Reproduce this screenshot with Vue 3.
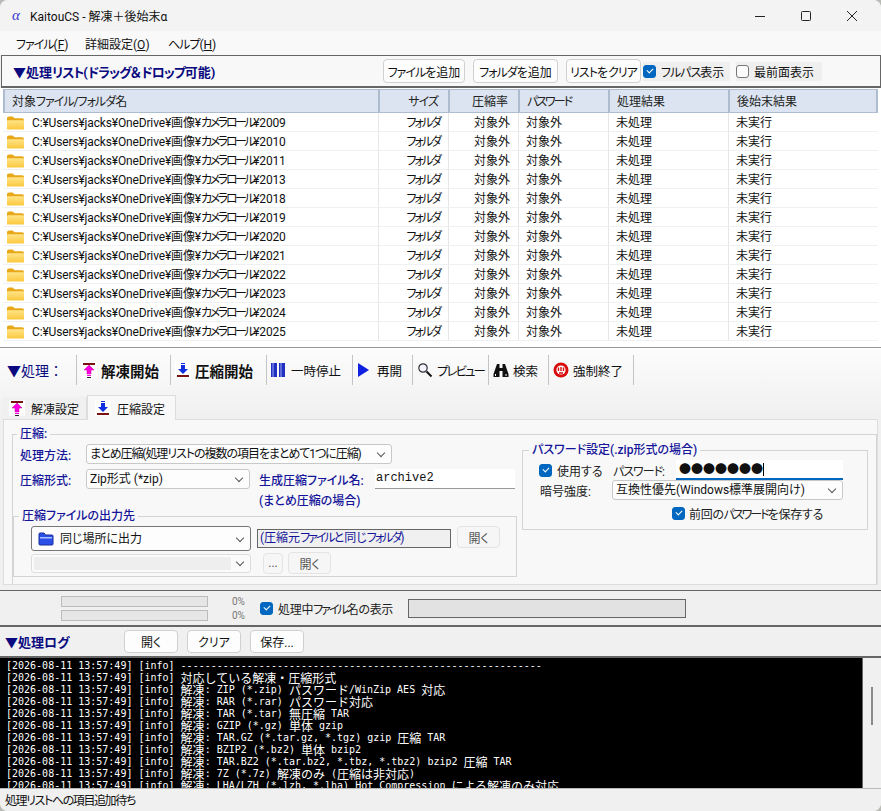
<template>
  <div class="win">
    <svg class="defs" width="0" height="0">
      <defs>
        <symbol id="up" viewBox="0 0 16 16">
          <rect width="16" height="16" fill="#fff" />
          <rect x="2" y="1" width="12" height="2" fill="#7a1010" />
          <path d="M8 3 L13 8 H10 V12 H6 V8 H3 Z" fill="#ff00e0" stroke="#c000a0" stroke-width=".5" />
          <rect x="6" y="13" width="4" height="1" fill="#ff00e0" />
          <rect x="6" y="15" width="4" height="1" fill="#222" />
        </symbol>
        <symbol id="down" viewBox="0 0 16 16">
          <rect width="16" height="16" fill="#fff" />
          <rect x="6" y="1" width="4" height="1" fill="#1030e0" />
          <path d="M6 3 H10 V7 H13 L8 12 L3 7 H6 Z" fill="#1030e0" />
          <rect x="2" y="13" width="12" height="2" fill="#7a1010" />
        </symbol>
        <symbol id="folder" viewBox="0 0 18 14">
          <path d="M0 2 Q0 0 2 0 H6 L8 2 H16 Q18 2 18 4 V5 H0 Z" fill="#e8a818" />
          <rect y="4" width="18" height="10" rx="1" fill="url(#fold)" />
          <linearGradient id="fold" x1="0" y1="0" x2="0" y2="1">
            <stop offset="0" stop-color="#ffe48a" />
            <stop offset="1" stop-color="#fbc83c" />
          </linearGradient>
        </symbol>
      </defs>
    </svg>

    <div class="title">
      <span class="alpha">α</span>
      <span class="title-text">KaitouCS - 解凍＋後始末α</span>
      <div class="caption">
        <svg width="12" height="12" viewBox="0 0 12 12"><path d="M1 6.5 H11" stroke="#222" /></svg>
        <svg width="12" height="12" viewBox="0 0 12 12"><rect x="1.5" y="1.5" width="9" height="9" rx="1" fill="none" stroke="#222" /></svg>
        <svg width="12" height="12" viewBox="0 0 12 12"><path d="M1 1 L11 11 M11 1 L1 11" stroke="#222" /></svg>
      </div>
    </div>

    <div class="menu">
      <span class="m1"><span class="k">ファイル</span>(<u>F</u>)</span>
      <span class="m2">詳細設定(<u>O</u>)</span>
      <span><span class="k">ヘルプ</span>(<u>H</u>)</span>
    </div>

    <div class="list-head">
      <b class="head-title">▼処理<span class="k">リスト</span>(<span class="k">ドラッグ</span>＆<span class="k">ドロップ</span>可能)</b>
      <div class="list-tools">
        <button class="btn tool-btn b1"><span class="k">ファイル</span>を追加</button>
        <button class="btn tool-btn b2"><span class="k">フォルダ</span>を追加</button>
        <button class="btn tool-btn b3"><span class="k">リスト</span>を<span class="k">クリア</span></button>
        <label class="opt opt1"><i class="check on"></i><span><span class="k">フルパス</span>表示</span></label>
        <label class="opt opt2"><i class="check"></i>最前面表示</label>
      </div>
    </div>

    <div class="list">
      <table>
        <colgroup>
          <col style="width: 375px" />
          <col style="width: 70px" />
          <col style="width: 70px" />
          <col style="width: 90px" />
          <col style="width: 120px" />
          <col />
        </colgroup>
        <thead>
          <tr>
            <th>対象<span class="k">ファイル/フォルダ</span>名</th>
            <th class="r"><span class="k">サイズ</span></th>
            <th class="r">圧縮率</th>
            <th><span class="kk">パスワード</span></th>
            <th>処理結果</th>
            <th>後始末結果</th>
          </tr>
        </thead>
        <tbody>
          <tr v-for="y in years" :key="y">
            <td class="name">
              <svg class="folder" width="17" height="14"><use href="#folder" /></svg>
              <span class="path">C:¥Users¥jacks¥OneDrive¥画像¥<span class="path-k">カメラ ロール</span>¥{{ y }}</span>
            </td>
            <td class="r"><span class="kk">フォルダ</span></td>
            <td class="r">対象外</td>
            <td>対象外</td>
            <td>未処理</td>
            <td>未実行</td>
          </tr>
        </tbody>
      </table>
    </div>

    <div class="toolbar-wrap">
      <div class="toolbar">
        <span class="tb-title">▼処理：</span>
        <div class="tb-item big" style="width: 94px">
          <svg width="16" height="16"><use href="#up" /></svg>解凍開始
        </div>
        <div class="tb-item big" style="width: 96px">
          <svg width="16" height="16"><use href="#down" /></svg>圧縮開始
        </div>
        <div class="tb-item" style="width: 86px">
          <svg width="16" height="16" viewBox="0 0 16 16">
            <rect x="0" y="1" width="6" height="14" fill="#2030c0" />
            <rect x="8" y="1" width="6" height="14" fill="#2030c0" />
            <path d="M2 1 V15 M10 1 V15" stroke="#9aa8f0" />
          </svg>一時停止
        </div>
        <div class="tb-item" style="width: 60px">
          <svg width="16" height="16" viewBox="0 0 16 16"><path d="M1 1 L12 8 L1 15 Z" fill="#1020e0" /></svg>再開
        </div>
        <div class="tb-item" style="width: 76px">
          <svg width="16" height="16" viewBox="0 0 16 16">
            <circle cx="6" cy="6" r="4.2" fill="#f4f4ff" stroke="#333" stroke-width="1.2" />
            <path d="M9.5 9.5 L14.5 14.5" stroke="#111" stroke-width="2" />
          </svg><span class="kk">プレビュー</span>
        </div>
        <div class="tb-item" style="width: 60px">
          <svg width="16" height="16" viewBox="0 0 16 16">
            <path d="M4 2 H6.5 V6 H9.5 V2 H12 L15.5 12 V15 H9.5 V9 H6.5 V15 H.5 V12 Z" fill="#111" />
            <path d="M2.5 12 V14 M13 12 V14" stroke="#fff" />
          </svg>検索
        </div>
        <div class="tb-item" style="width: 86px">
          <svg width="16" height="16" viewBox="0 0 16 16">
            <circle cx="8" cy="8" r="7.5" fill="#d80c0c" />
            <circle cx="8" cy="8" r="4.6" fill="#fff" />
            <path d="M5.5 5.5 V9 M8 5 V9 M10.5 5.5 V9 M6 11 H10" stroke="#d80c0c" stroke-width="1.4" />
          </svg>強制終了
        </div>
      </div>
      <div class="tabs">
        <div class="tab">
          <svg width="16" height="16"><use href="#up" /></svg>解凍設定
        </div>
        <div class="tab active">
          <svg width="16" height="16"><use href="#down" /></svg>圧縮設定
        </div>
      </div>
    </div>

    <div class="page">
      <fieldset class="outer">
        <legend>圧縮:</legend>
        <div class="cols">
          <div class="left">
            <div class="row">
              <span class="lab">処理方法:</span>
              <div class="sel method">まとめ圧縮(処理リストの複数の項目をまとめて1つに圧縮)</div>
            </div>
            <div class="row row2">
              <span class="lab">圧縮形式:</span>
              <div class="sel fmt">Zip形式 (*zip)</div>
              <span class="lab name-lab">生成圧縮ファイル名:</span>
              <div class="text-in">archive2</div>
            </div>
            <div class="lab note">(まとめ圧縮の場合)</div>
            <fieldset class="out">
              <legend>圧縮ファイルの出力先</legend>
              <div class="out-grid">
                <div class="sel dest">
                  <svg width="16" height="14" viewBox="0 0 16 14">
                    <path d="M1 2 Q1 1 2 1 H6 L7.5 3 H14 Q15 3 15 4 V12 Q15 13 14 13 H2 Q1 13 1 12 Z" fill="#2a50e8" stroke="#1a2f9c" />
                    <rect x="2" y="5" width="12" height="1.5" fill="#a8c0ff" />
                  </svg>
                  同じ場所に出力
                </div>
                <div class="path-box">(圧縮元<span class="kk">ファイル</span>と同じ<span class="kk">フォルダ</span>)</div>
                <button class="btn off open1">開く</button>
                <div class="sel disabled"><span class="fill"></span></div>
                <div class="out-btns">
                  <button class="btn off dots">...</button>
                  <button class="btn off open2">開く</button>
                </div>
              </div>
            </fieldset>
          </div>
          <fieldset class="pw">
            <legend>パスワード設定(.zip形式の場合)</legend>
            <div class="pw-row first">
              <label class="plain use"><i class="check on"></i>使用する</label>
              <span class="plain pw-lab"><span class="k">パスワード</span>:</span>
              <div class="pw-in">●●●●●●●<i class="caret"></i></div>
            </div>
            <div class="pw-row">
              <span class="plain enc-lab">暗号強度:</span>
              <div class="sel enc">互換性優先(Windows標準展開向け)</div>
            </div>
            <label class="plain save"><i class="check on"></i><span>前回の<span class="kk">パスワード</span>を保存する</span></label>
          </fieldset>
        </div>
      </fieldset>
    </div>

    <div class="progress">
      <div class="bars">
        <div class="bar-row"><div class="bar"></div><span class="pct">0%</span></div>
        <div class="bar-row"><div class="bar"></div><span class="pct">0%</span></div>
      </div>
      <label class="plain prog-opt"><i class="check on"></i><span>処理中<span class="kk">ファイル</span>名の表示</span></label>
      <div class="prog-file"></div>
    </div>

    <div class="log-head">
      <b class="head-title log-title">▼処理ログ</b>
      <button class="btn log-btn">開く</button>
      <button class="btn log-btn">クリア</button>
      <button class="btn log-btn">保存...</button>
    </div>

    <div class="log-wrap">
      <div class="log">
        <div v-for="(line, i) in logLines" :key="i" class="log-line">
          <span v-for="(part, j) in split(stamp + line)" :key="j" :class="{ wide: part.wide }">{{ part.text }}</span>
        </div>
      </div>
      <div class="scroll"><div class="thumb"></div></div>
    </div>

    <div class="status">処理リストへの項目追加待ち</div>
  </div>
</template>

<script setup>
const years = [2009, 2010, 2011, 2013, 2018, 2019, 2020, 2021, 2022, 2023, 2024, 2025]

const stamp = "[2026-08-11 13:57:49] [info] "
const logLines = [
  "-".repeat(60),
  "対応している解凍・圧縮形式",
  "解凍: ZIP (*.zip) パスワード/WinZip AES 対応",
  "解凍: RAR (*.rar) パスワード対応",
  "解凍: TAR (*.tar) 無圧縮 TAR",
  "解凍: GZIP (*.gz) 単体 gzip",
  "解凍: TAR.GZ (*.tar.gz, *.tgz) gzip 圧縮 TAR",
  "解凍: BZIP2 (*.bz2) 単体 bzip2",
  "解凍: TAR.BZ2 (*.tar.bz2, *.tbz, *.tbz2) bzip2 圧縮 TAR",
  "解凍: 7Z (*.7z) 解凍のみ (圧縮は非対応)",
  "解凍: LHA/LZH (*.lzh, *.lha) Hot Compression による解凍のみ対応",
]

// 全角だけ 12px にして半角 6px / 全角 12px の等幅に揃える
function split(text) {
  return text.match(/[\u3000-\u9fff]+|[^\u3000-\u9fff]+/g).map((s) => ({
    text: s,
    wide: /[\u3000-\u9fff]/.test(s),
  }))
}
</script>

<style>
html,
body {
  margin: 0;
  background: #b9bcb6;
  overflow: hidden;
}
</style>

<style scoped>
.win {
  width: 881px;
  height: 811px;
  box-sizing: border-box;
  overflow: hidden;
  background: #f0f0f0;
  border-radius: 8px;
  font-family: Roboto, "Noto Sans CJK JP", "Liberation Sans", sans-serif;
  font-size: 12px;
  font-feature-settings: "palt";
  white-space: nowrap;
  color: #111;
  display: flex;
  flex-direction: column;
}
.defs {
  position: absolute;
}
svg {
  flex: none;
}
.k {
  letter-spacing: -1px;
}
.kk {
  letter-spacing: -2px;
}
.title {
  height: 31px;
  flex: none;
  background: #f3f3f3;
  display: flex;
  align-items: center;
  padding-left: 12px;
}
.alpha {
  width: 18px;
  color: #3a3ad0;
  font-family: "Liberation Serif", serif;
  font-style: italic;
  font-size: 15px;
}
.caption {
  margin-left: auto;
  display: flex;
  gap: 34px;
  padding-right: 23px;
}
.menu {
  height: 24px;
  flex: none;
  background: #f9f9f9;
  display: flex;
  align-items: center;
  padding-left: 16px;
}
.m1 {
  width: 69px;
}
.m2 {
  width: 83px;
}
.list-head {
  height: 33px;
  flex: none;
  box-sizing: border-box;
  border: 1px solid #666;
  border-bottom-width: 2px;
  margin: 0 0 0 1px;
  background: #f8f8f8;
  display: flex;
  align-items: center;
  padding-left: 11px;
}
.head-title {
  color: #0a0a80;
  font-size: 13px;
}
.list-tools {
  margin-left: auto;
  display: flex;
  align-items: center;
  gap: 8px;
  padding-right: 58px;
}
.btn {
  font: inherit;
  font-feature-settings: inherit;
  color: #111;
  background: #fdfdfd;
  border: 1px solid #d0d0d0;
  border-radius: 4px;
  padding: 0;
  box-sizing: border-box;
}
.tool-btn {
  height: 24px;
}
.b1 {
  width: 82px;
}
.b2 {
  width: 85px;
}
.b3 {
  width: 75px;
}
.opt {
  display: flex;
  align-items: center;
  gap: 5px;
  height: 19px;
  background: #efefef;
  box-sizing: border-box;
}
.opt1 {
  width: 87px;
  margin-left: -6px;
}
.opt2 {
  width: 86px;
  margin-left: -2px;
}
.check {
  display: inline-block;
  width: 13px;
  height: 13px;
  box-sizing: border-box;
  border: 1px solid #777;
  border-radius: 3px;
  background: #fbfbfb;
  position: relative;
  flex: none;
}
.check.on {
  background: #0067c0;
  border-color: #0067c0;
}
.check.on::after {
  content: "";
  position: absolute;
  left: 3px;
  top: 2px;
  width: 5px;
  height: 3px;
  border-left: 1px solid #fff;
  border-bottom: 1px solid #fff;
  transform: rotate(-45deg);
}
.list {
  height: 259px;
  flex: none;
  padding: 1px 3px 0;
  box-sizing: border-box;
  background: #fff;
  overflow: hidden;
}
table {
  width: 875px;
  table-layout: fixed;
  border-collapse: separate;
  border-spacing: 0;
}
th {
  height: 24px;
  padding: 0 8px 1px 7px;
  background: #dbe4f0;
  border-top: 1px solid #aebccf;
  border-bottom: 1px solid #aebccf;
  border-left: 2px solid #aebccf;
  font-weight: 400;
  text-align: left;
  color: #222;
  box-sizing: border-box;
}
th:last-child {
  border-right: 2px solid #aebccf;
}
th.r {
  text-align: right;
  padding-right: 10px;
}
td {
  height: 19px;
  padding: 1px 8px 0 7px;
  border-bottom: 1px solid #eef0f4;
  border-left: 1px solid #e6e6e6;
  box-sizing: border-box;
  line-height: 16px;
}
td.r {
  text-align: right;
}
td.name {
  padding-left: 4px;
  border-left: 0;
}
.folder {
  vertical-align: -3px;
  margin-right: 8px;
}
.path {
  letter-spacing: -0.15px;
}
.path-k {
  letter-spacing: -2.5px;
}
.toolbar-wrap {
  height: 72px;
  flex: none;
  border-top: 1px solid #999;
  background: linear-gradient(#fcfcfc, #f0f0f0);
  box-sizing: border-box;
  display: flex;
  flex-direction: column;
}
.toolbar {
  display: flex;
  height: 30px;
  margin-top: 7px;
  flex: none;
  align-items: center;
}
.tb-title {
  width: 76px;
  padding-left: 7px;
  box-sizing: border-box;
  font-size: 14px;
  font-feature-settings: normal;
  color: #0a0a80;
}
.tb-item {
  height: 30px;
  box-sizing: border-box;
  border-left: 1px solid #c4c4c4;
  display: flex;
  align-items: center;
  gap: 4px;
  padding-left: 4px;
  font-size: 12.5px;
}
.tb-item:last-child {
  border-right: 1px solid #c4c4c4;
}
.big {
  font-size: 14.5px;
  font-weight: 700;
}
.tabs {
  display: flex;
  margin-top: auto;
  padding-left: 2px;
  align-items: flex-end;
}
.tab {
  height: 22px;
  width: 85px;
  box-sizing: border-box;
  display: flex;
  align-items: center;
  gap: 6px;
  padding-left: 7px;
  background: #f0f0f0;
  border-right: 1px solid #ddd;
}
.tab.active {
  height: 25px;
  width: 89px;
  background: #f8f8f8;
  border: 1px solid #ddd;
  border-bottom: 0;
  margin-bottom: -1px;
  position: relative;
}
.page {
  height: 166px;
  flex: none;
  margin: 0 3px;
  box-sizing: border-box;
  background: #f8f8f8;
  border: 1px solid #ddd;
  padding: 6px 0 0 8px;
  overflow: hidden;
}
fieldset {
  margin: 0;
  border: 1px solid #d4d4d4;
  padding: 0;
  min-width: 0;
}
legend {
  padding: 0 3px;
  margin-left: 4px;
  color: #15159a;
  font-size: 12px;
  font-weight: 500;
  line-height: 16px;
}
.outer {
  width: 865px;
  height: 158px;
  box-sizing: border-box;
  border-bottom: 0;
}
.cols {
  display: flex;
  gap: 5px;
  align-items: flex-start;
}
.left {
  width: 504px;
  flex: none;
}
.row {
  display: flex;
  align-items: center;
  height: 20px;
  padding-left: 7px;
  margin-top: 2px;
}
.row2 {
  margin-top: 5px;
}
.lab {
  color: #15159a;
  font-weight: 500;
  width: 66px;
  flex: none;
}
.sel {
  height: 20px;
  box-sizing: border-box;
  background: #fdfdfd;
  border: 1px solid #c8c8c8;
  border-radius: 3px;
  padding-left: 3px;
  line-height: 18px;
  position: relative;
  display: flex;
  align-items: center;
}
.sel::after {
  content: "";
  position: absolute;
  right: 7px;
  top: 50%;
  margin-top: -4px;
  width: 5px;
  height: 5px;
  border-right: 1px solid #555;
  border-bottom: 1px solid #555;
  transform: rotate(45deg);
}
.method {
  width: 306px;
  letter-spacing: -1.05px;
}
.fmt {
  width: 164px;
}
.name-lab {
  width: 116px;
  margin-left: 9px;
}
.text-in {
  width: 140px;
  height: 20px;
  box-sizing: border-box;
  background: #fff;
  border-bottom: 1px solid #999;
  padding-left: 1px;
  line-height: 19px;
  font-family: "Liberation Mono", monospace;
}
.note {
  width: auto;
  margin: 2px 0 0 246px;
  height: 18px;
}
.out {
  margin-top: -1px;
  height: 69px;
  box-sizing: border-box;
}
.out legend {
  margin-left: 5px;
}
.out-grid {
  display: grid;
  grid-template-columns: 220px 194px 43px;
  gap: 1px 6px;
  padding: 2px 0 0 17px;
  align-items: center;
}
.dest {
  height: 25px;
  border-color: #777;
  gap: 6px;
  padding-left: 6px;
}
.path-box {
  height: 19px;
  box-sizing: border-box;
  border: 1px solid #666;
  background: #f0f0f0;
  color: #15159a;
  line-height: 17px;
  padding-left: 2px;
}
.off {
  background: #f6f6f6;
  border-color: #e4e4e4;
  color: #555;
}
.open1 {
  height: 22px;
  align-self: start;
}
.disabled {
  height: 19px;
  background: #fbfbfb;
  padding: 2px;
  border-color: #ddd;
}
.fill {
  display: block;
  width: 197px;
  height: 13px;
  background: #eee;
}
.out-btns {
  display: flex;
  gap: 5px;
  margin-left: 6px;
  grid-column: span 2;
  align-items: center;
}
.dots {
  width: 20px;
  height: 21px;
}
.open2 {
  width: 43px;
  height: 22px;
}
.pw {
  width: 346px;
  height: 88px;
  box-sizing: border-box;
  flex: none;
}
.pw legend {
  margin-left: 6px;
}
.plain {
  color: #222;
}
.pw-row {
  display: flex;
  align-items: center;
  height: 20px;
}
.first {
  margin-top: 2px;
}
.use {
  display: flex;
  align-items: center;
  gap: 5px;
  width: 74px;
  margin-left: 16px;
}
.pw-lab {
  width: 63px;
  flex: none;
}
.pw-in {
  width: 167px;
  height: 20px;
  box-sizing: border-box;
  background: #fff;
  border-bottom: 2px solid #0067c0;
  line-height: 18px;
  padding-left: 3px;
  font-family: "Noto Sans CJK JP", sans-serif;
  font-feature-settings: normal;
  display: flex;
  align-items: center;
}
.caret {
  display: inline-block;
  width: 1px;
  height: 13px;
  background: #000;
}
.enc-lab {
  margin-left: 17px;
  width: 72px;
  flex: none;
}
.enc {
  width: 231px;
}
.save {
  display: flex;
  align-items: center;
  gap: 4px;
  margin: 5px 0 0 149px;
  letter-spacing: -0.3px;
}
.progress {
  height: 37px;
  flex: none;
  box-sizing: border-box;
  margin-top: 5px;
  border-top: 1px solid #666;
  border-bottom: 2px solid #666;
  display: flex;
  align-items: center;
  padding-left: 61px;
}
.bars {
  width: 199px;
  flex: none;
  display: flex;
  flex-direction: column;
  gap: 3px;
}
.bar-row {
  display: flex;
  align-items: center;
  height: 11px;
}
.bar {
  width: 147px;
  height: 11px;
  box-sizing: border-box;
  background: #e6e6e6;
  border: 1px solid #bcbcbc;
}
.pct {
  margin-left: 24px;
  font-size: 10px;
  color: #777;
}
.prog-opt {
  display: flex;
  align-items: center;
  gap: 5px;
  width: 148px;
  flex: none;
  letter-spacing: -0.3px;
}
.prog-file {
  width: 278px;
  height: 19px;
  box-sizing: border-box;
  background: #e2e2e2;
  border: 1px solid #666;
}
.log-head {
  height: 31px;
  flex: none;
  box-sizing: border-box;
  border-bottom: 2px solid #666;
  display: flex;
  align-items: center;
  gap: 9px;
  padding-left: 5px;
}
.log-title {
  width: 110px;
}
.log-btn {
  width: 54px;
  height: 23px;
}
.log-wrap {
  height: 130px;
  flex: none;
  display: flex;
  border-bottom: 1px solid #bbb;
}
.log {
  width: 863px;
  background: #000;
  color: #fff;
  overflow: hidden;
  padding: 2px 0 0 6px;
  box-sizing: border-box;
  border-right: 1px solid #666;
  font-family: "DejaVu Sans Mono", "Liberation Mono", monospace;
  font-size: 10px;
  font-feature-settings: normal;
  flex: none;
}
.log-line {
  height: 12px;
  line-height: 12px;
  white-space: pre;
  display: flex;
  align-items: center;
}
.wide {
  font-family: "Noto Sans CJK JP", sans-serif;
  font-size: 12px;
}
.scroll {
  flex: 1;
  position: relative;
}
.thumb {
  position: absolute;
  left: 8px;
  top: 29px;
  width: 2px;
  height: 38px;
  background: #8a8a8a;
}
.status {
  flex: 1;
  padding-left: 5px;
  line-height: 24px;
  letter-spacing: -1.4px;
  background: #f0f0f0;
}
</style>
